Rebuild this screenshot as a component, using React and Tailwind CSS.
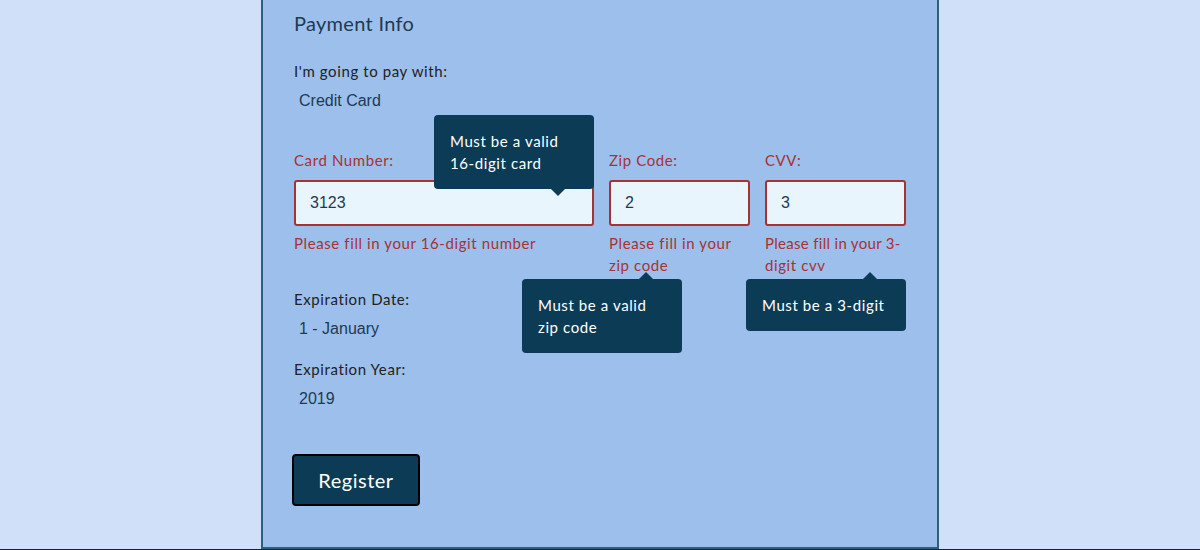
import React from 'react'

const font = { fontFamily: 'Lato, "Open Sans", sans-serif' }
const arial = { fontFamily: '"Liberation Sans", Arial, sans-serif' }

function Tooltip({ text, className, arrow }) {
    return (
        <div className={`absolute w-[160px] rounded bg-[#0c3c55] px-4 py-[15px] text-[15px] leading-[22px] tracking-[0.6px] text-white ${className}`}>
            {text}
            {arrow === 'down' ? (
                <span className="absolute left-[117px] top-full h-0 w-0 border-x-[7px] border-t-[7px] border-x-transparent border-t-[#0c3c55]" />
            ) : (
                <span className="absolute left-[117px] bottom-full h-0 w-0 border-x-[7px] border-b-[7px] border-x-transparent border-b-[#0c3c55]" />
            )}
        </div>
    )
}

function Field({ label, value, error, children }) {
    return (
        <div className="relative flex flex-col">
            <label className="text-[15px] leading-[22px] tracking-[0.6px] text-[#a83232]">
                {label}
            </label>
            <input
                readOnly
                value={value}
                className="mt-[9px] h-[46px] w-full rounded-[3px] border-2 border-[#a83232] bg-[#e9f5fc] px-[14px] text-[16px] text-[#1e3a52] outline-none"
                style={arial}
            />
            <p className="mt-[6px] text-[15px] leading-[22px] tracking-[0.6px] text-[#a83232]">
                {error}
            </p>
            {children}
        </div>
    )
}

export default function App() {
    return (
        <div className="h-[550px] border-b border-[#222] bg-[#cfe0f8] flex justify-center overflow-hidden" style={font}>

            <div className="w-[678px] h-[549px] border-x-2 border-b-2 border-[#2e5f80] bg-[#9dbfec] pl-[31px] pr-[31px] pt-[9px]">

                <h2 className="text-[20px] leading-[28px] tracking-[0.3px] text-[#1e3a52]">
                    Payment Info
                </h2>

                <p className="mt-[23px] text-[15px] leading-[22px] tracking-[0.6px] text-[#222]">
                    I'm going to pay with:
                </p>
                <div className="mt-[8px] pl-[5px] text-[16px] leading-[22px] text-[#1e3a52]" style={arial}>
                    Credit Card
                </div>

                {/* Card row */}
                <div className="mt-[37px] grid grid-cols-[300px_141px_141px] gap-x-[15px]">
                    <Field label="Card Number:" value="3123" error="Please fill in your 16-digit number">
                        <Tooltip text="Must be a valid 16-digit card" arrow="down" className="right-0 top-[-34px]" />
                    </Field>
                    <Field label="Zip Code:" value="2" error="Please fill in your zip code">
                        <Tooltip text="Must be a valid zip code" arrow="up" className="left-[-87px] top-[130px]" />
                    </Field>
                    <Field
                        label="CVV:"
                        value="3"
                        error={<><span className="whitespace-nowrap tracking-[0.3px]">Please fill in your 3-</span><br />digit cvv</>}
                    >
                        <Tooltip text="Must be a 3-digit" arrow="up" className="left-[-19px] top-[130px]" />
                    </Field>
                </div>

                <p className="mt-[12px] text-[15px] leading-[22px] tracking-[0.6px] text-[#222]">
                    Expiration Date:
                </p>
                <div className="mt-[8px] pl-[5px] text-[16px] leading-[22px] text-[#1e3a52]" style={arial}>
                    1 - January
                </div>

                <p className="mt-[18px] text-[15px] leading-[22px] tracking-[0.6px] text-[#222]">
                    Expiration Year:
                </p>
                <div className="mt-[8px] pl-[5px] text-[16px] leading-[22px] text-[#1e3a52]" style={arial}>
                    2019
                </div>

                <button className="mt-[44px] -ml-[2px] h-[52px] w-[128px] rounded border-2 border-black bg-[#0c3c55] text-[20px] tracking-[0.5px] text-white">
                    Register
                </button>
            </div>
        </div>
    )
}
